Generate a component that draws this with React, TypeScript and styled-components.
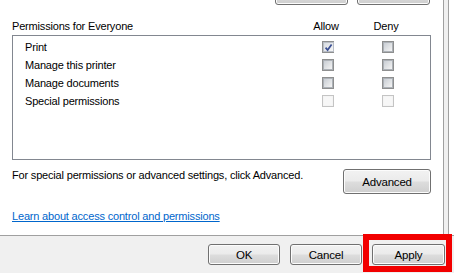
import styled, { createGlobalStyle } from "styled-components";

const GlobalStyle = createGlobalStyle`
  html, body {
    margin: 0;
    padding: 0;
    background: #ffffff;
  }
  body {
    width: 454px;
    height: 273px;
    overflow: hidden;
    font-family: "Liberation Sans", Arial, sans-serif;
    font-size: 11px;
    letter-spacing: -0.18px;
    color: #000000;
  }
`;

interface Permission {
  id: string;
  label: string;
  allow: boolean;
  deny: boolean;
  disabled?: boolean;
}

const permissions: Permission[] = [
  { id: "print", label: "Print", allow: true, deny: false },
  { id: "manage-printer", label: "Manage this printer", allow: false, deny: false },
  { id: "manage-docs", label: "Manage documents", allow: false, deny: false },
  { id: "special", label: "Special permissions", allow: false, deny: false, disabled: true },
];

interface CheckProps {
  checked?: boolean;
  disabled?: boolean;
}

const Check = (props: CheckProps) => {
  const { checked, disabled } = props;

  return (
    <CheckOuter $disabled={!!disabled}>
      <CheckInner $disabled={!!disabled} $checked={!!checked}>
        {checked && (
          <svg width="9" height="9" viewBox="0 0 9 9">
            <path d="M1.6 4.6 L3.6 7 L7.6 1.4" fill="none" stroke="#3b4f93" strokeWidth="1.7" />
          </svg>
        )}
      </CheckInner>
    </CheckOuter>
  );
};

const App = () => {
  return (
    <>
      <GlobalStyle />
      <Dialog>
        <Main>
          <Page>
            <TopButtons>
              <Button $width={73} />
              <Button $width={73} />
            </TopButtons>
            <HeaderRow>
              <span>Permissions for Everyone</span>
              <HeaderCell>Allow</HeaderCell>
              <HeaderCell>Deny</HeaderCell>
            </HeaderRow>
            <PermBox>
              {permissions.map((p) => (
                <PermRow key={p.id}>
                  <PermLabel>{p.label}</PermLabel>
                  <CheckCell>
                    <Check checked={p.allow} disabled={p.disabled} />
                  </CheckCell>
                  <CheckCell>
                    <Check checked={p.deny} disabled={p.disabled} />
                  </CheckCell>
                </PermRow>
              ))}
            </PermBox>
            <InfoRow>
              <InfoText>For special permissions or advanced settings, click Advanced.</InfoText>
              <Button $width={88} $height={25}>Advanced</Button>
            </InfoRow>
            <HelpLink href="#">Learn about access control and permissions</HelpLink>
          </Page>
          <EdgeStrip />
        </Main>
        <Footer>
          <Button $width={72} $height={21}>OK</Button>
          <Button $width={72} $height={21}>Cancel</Button>
          <Highlight>
            <Button $width={73} $height={21}>Apply</Button>
          </Highlight>
        </Footer>
      </Dialog>
    </>
  );
};

export default App;

const Dialog = styled.div`
  width: 454px;
  height: 273px;
  display: flex;
  flex-direction: column;
  background: #ffffff;
`;

const Main = styled.div`
  display: flex;
  height: 235px;
`;

const Page = styled.div`
  width: 431px;
  padding-left: 12px;
  border-right: 1px solid #a0a0a0;
  display: flex;
  flex-direction: column;
`;

const EdgeStrip = styled.div`
  width: 4px;
  background: #f0f0f0;
  border-right: 1px solid #a0a0a0;
`;

const TopButtons = styled.div`
  height: 5px;
  overflow: hidden;
  display: flex;
  align-items: flex-end;
  gap: 9px;
  padding-left: 263px;
`;

const Button = styled.button<{ $width: number; $height?: number }>`
  flex: none;
  width: ${(props) => props.$width}px;
  height: ${(props) => props.$height ?? 23}px;
  padding: 0;
  border: 1px solid #707070;
  border-radius: 3px;
  box-shadow: inset 0 0 0 1px #fcfcfc;
  background: linear-gradient(to bottom, #f2f2f2 0%, #ebebeb 48%, #dddddd 52%, #cfcfcf 100%);
  font-family: "Liberation Sans", Arial, sans-serif;
  font-size: 11.5px;
  letter-spacing: -0.2px;
  color: #000000;
  text-align: center;
`;

const HeaderRow = styled.div`
  display: grid;
  grid-template-columns: 1fr 60px 60px 13px;
  align-items: center;
  width: 419px;
  height: 14px;
  line-height: 14px;
  padding: 14px 0 2px;
`;

const HeaderCell = styled.span`
  text-align: center;
  padding-right: 4px;
`;

const PermBox = styled.div`
  box-sizing: border-box;
  width: 419px;
  height: 125px;
  border: 1px solid #828790;
  padding-top: 2px;
  display: flex;
  flex-direction: column;
`;

const PermRow = styled.div`
  display: grid;
  grid-template-columns: 1fr 60px 60px 12px;
  align-items: center;
  height: 18px;
`;

const PermLabel = styled.span`
  padding-left: 12px;
  line-height: 14px;
`;

const CheckCell = styled.div`
  display: flex;
  justify-content: center;
`;

const CheckOuter = styled.span<{ $disabled: boolean }>`
  box-sizing: border-box;
  width: 12px;
  height: 12px;
  padding: 1px;
  border: 1px solid ${(props) => (props.$disabled ? "#c4c4c4" : "#8e8f8f")};
  background: #ffffff;
  display: flex;
`;

const CheckInner = styled.span<{ $disabled: boolean; $checked: boolean }>`
  flex: 1;
  display: flex;
  align-items: center;
  justify-content: center;
  border: 1px solid ${(props) => (props.$disabled ? "#f4f4f4" : props.$checked ? "#b9bec6" : "#adb2b8")};
  background: ${(props) =>
    props.$disabled
      ? "#f7f7f7"
      : props.$checked
      ? "linear-gradient(135deg, #d8dce1, #f6f6f6)"
      : "linear-gradient(135deg, #c9ced4, #f4f4f4)"};
  margin: -1px;
`;

const InfoRow = styled.div`
  display: flex;
  justify-content: space-between;
  align-items: flex-start;
  width: 419px;
  margin-top: 9px;
`;

const InfoText = styled.span`
  line-height: 12px;
`;

const HelpLink = styled.a`
  margin-top: 15px;
  line-height: 14px;
  color: #0066cc;
  text-decoration: underline;
  align-self: flex-start;
`;

const Footer = styled.div`
  flex: 1;
  display: flex;
  justify-content: flex-end;
  align-items: flex-start;
  gap: 10px;
  padding: 8px 9px 0 0;
  border-top: 1px solid #a0a0a0;
  background: #f0f0f0;
`;

const Highlight = styled.span`
  position: relative;
  display: flex;

  &::after {
    content: "";
    position: absolute;
    top: -10px;
    bottom: -7px;
    left: -9px;
    right: -7px;
    border: 6px solid #f20000;
    pointer-events: none;
  }
`;
